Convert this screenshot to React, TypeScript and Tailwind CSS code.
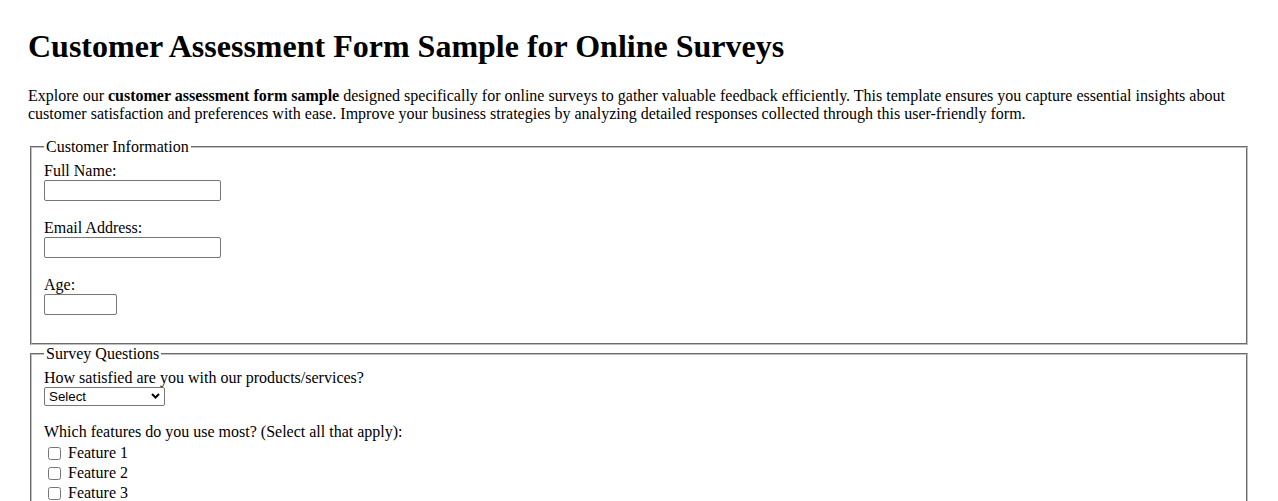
import { useState } from 'react'

const serif = "font-['Liberation_Serif','Times_New_Roman',serif]"

function TextField({ label, id, type = 'text', width }: { label: string; id: string; type?: string; width: string }) {
  return (
    <div className="mb-[18px]">
      <label htmlFor={id} className="block h-[18px] leading-[18px]">
        {label}
      </label>
      <input
        id={id}
        type={type}
        className={`block h-[21px] ${width} rounded-[2px] border border-[#767676] bg-white px-[2px] py-[1px] font-['Liberation_Sans',Arial,sans-serif] text-[13.33px]`}
      />
    </div>
  )
}

function Feature({ name }: { name: string }) {
  const [checked, setChecked] = useState(false)
  return (
    <div className="flex h-[20px] items-start">
      <input
        type="checkbox"
        checked={checked}
        onChange={(e) => setChecked(e.target.checked)}
        className="ml-[4px] mr-[3px] mt-[5px] h-[13px] w-[13px]"
      />
      <label className="ml-[4px] mt-[2px] leading-[18px]">{name}</label>
    </div>
  )
}

export default function App() {
  const [satisfaction, setSatisfaction] = useState('')

  return (
    <div className={`h-[501px] overflow-hidden bg-white px-[28px] pt-[28px] text-[16px] leading-[normal] text-black ${serif}`}>
      <h1 className="mb-[22.44px] text-[32px] font-bold leading-[normal]">Customer Assessment Form Sample for Online Surveys</h1>

      <p className="mb-[15px]">
        Explore our <strong className="font-bold">customer assessment form sample</strong> designed specifically for online surveys to gather
        valuable feedback efficiently. This template ensures you capture essential insights about customer satisfaction and preferences with
        ease. Improve your business strategies by analyzing detailed responses collected through this user-friendly form.
      </p>

      <form>
        <fieldset className="mx-[2px] border-2 border-[#c0c0c0] px-[12px] pb-[10px] pt-[6px] [border-style:groove]">
          <legend className="px-[2px] leading-[18px]">Customer Information</legend>
          <TextField label="Full Name:" id="name" width="w-[177px]" />
          <TextField label="Email Address:" id="email" type="email" width="w-[177px]" />
          <TextField label="Age:" id="age" type="number" width="w-[73px]" />
        </fieldset>

        <fieldset className="mx-[2px] border-2 border-[#c0c0c0] px-[12px] pb-[10px] pt-[6px] [border-style:groove]">
          <legend className="px-[2px] leading-[18px]">Survey Questions</legend>

          <label htmlFor="satisfaction" className="block h-[18px] leading-[18px]">
            How satisfied are you with our products/services?
          </label>
          <div className="relative mb-[17px] h-[19px] w-[121px]">
            <select
              id="satisfaction"
              value={satisfaction}
              onChange={(e) => setSatisfaction(e.target.value)}
              className="block h-[19px] w-[121px] appearance-none rounded-[2px] border border-[#767676] bg-white pl-[4px] font-['Liberation_Sans',Arial,sans-serif] text-[13.33px] leading-[15px]"
            >
              <option value="">Select</option>
              <option value="very">Very Satisfied</option>
              <option value="satisfied">Satisfied</option>
              <option value="neutral">Neutral</option>
              <option value="unsatisfied">Unsatisfied</option>
            </select>
            <svg className="pointer-events-none absolute left-[107px] top-[6px]" width="9" height="6" viewBox="0 0 9 6">
              <polyline points="1,1 4.5,4.5 8,1" fill="none" stroke="#000" strokeWidth="2" />
            </svg>
          </div>

          <p className="h-[18.4px]">Which features do you use most? (Select all that apply):</p>
          <Feature name="Feature 1" />
          <Feature name="Feature 2" />
          <Feature name="Feature 3" />
          <Feature name="Feature 4" />

          <label htmlFor="comments" className="mt-[18px] block">
            Additional Comments:
          </label>
          <textarea id="comments" rows={4} className="block w-[300px] border border-[#767676]" />
        </fieldset>
      </form>
    </div>
  )
}
